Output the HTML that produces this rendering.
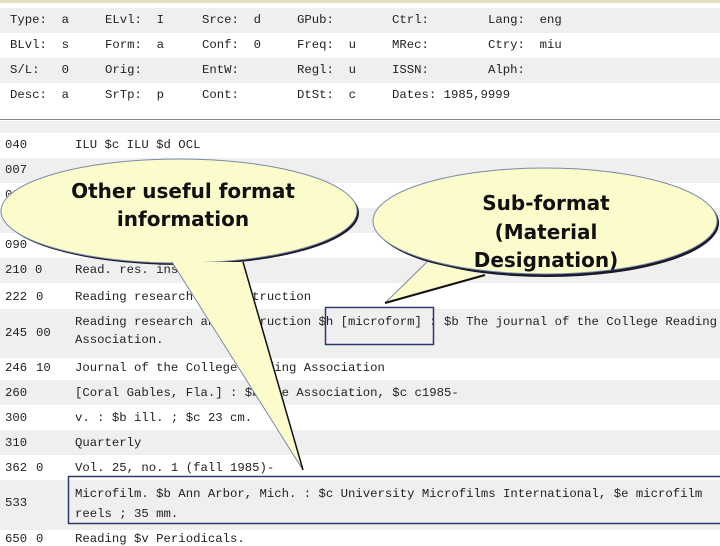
<!DOCTYPE html>
<html><head><meta charset="utf-8"><style>
html,body{margin:0;padding:0;width:720px;height:540px;overflow:hidden;background:#fff;font-family:"Liberation Mono",monospace;font-size:12.3px;color:#222}
.r{position:absolute;left:0;width:720px}
.g{background:#efefef}
.t{position:absolute;white-space:pre}
</style></head><body>
<div class="r" style="top:0;height:3px;background:#e8dcc0"></div>
<div class="r g" style="top:8px;height:25px"></div>
<div class="r g" style="top:58px;height:25px"></div>
<div class="r" style="top:119px;height:1px;background:#8a8a8a"></div>
<div class="r g" style="top:121px;height:12px"></div>
<div class="r g" style="top:158px;height:25px"></div>
<div class="r g" style="top:208px;height:25px"></div>
<div class="r g" style="top:258px;height:25px"></div>
<div class="r g" style="top:309px;height:49px"></div>
<div class="r g" style="top:380px;height:25px"></div>
<div class="r g" style="top:430px;height:25px"></div>
<div class="r g" style="top:480px;height:50px"></div>

<div class="t" style="left:10px;top:13px">Type:  a</div>
<div class="t" style="left:105px;top:13px">ELvl:  I</div>
<div class="t" style="left:202px;top:13px">Srce:  d</div>
<div class="t" style="left:297px;top:13px">GPub:</div>
<div class="t" style="left:392px;top:13px">Ctrl:</div>
<div class="t" style="left:488px;top:13px">Lang:  eng</div>
<div class="t" style="left:10px;top:38px">BLvl:  s</div>
<div class="t" style="left:105px;top:38px">Form:  a</div>
<div class="t" style="left:202px;top:38px">Conf:  0</div>
<div class="t" style="left:297px;top:38px">Freq:  u</div>
<div class="t" style="left:392px;top:38px">MRec:</div>
<div class="t" style="left:488px;top:38px">Ctry:  miu</div>
<div class="t" style="left:10px;top:63px">S/L:   0</div>
<div class="t" style="left:105px;top:63px">Orig:</div>
<div class="t" style="left:202px;top:63px">EntW:</div>
<div class="t" style="left:297px;top:63px">Regl:  u</div>
<div class="t" style="left:392px;top:63px">ISSN:</div>
<div class="t" style="left:488px;top:63px">Alph:</div>
<div class="t" style="left:10px;top:88px">Desc:  a</div>
<div class="t" style="left:105px;top:88px">SrTp:  p</div>
<div class="t" style="left:202px;top:88px">Cont:</div>
<div class="t" style="left:297px;top:88px">DtSt:  c</div>
<div class="t" style="left:392px;top:88px">Dates: 1985,9999</div>

<div class="t" style="left:5px;top:138px">040</div><div class="t" style="left:75px;top:138px">ILU $c ILU $d OCL</div>
<div class="t" style="left:5px;top:163px">007</div>
<div class="t" style="left:5px;top:188px">008</div>
<div class="t" style="left:5px;top:238px">090</div>
<div class="t" style="left:5px;top:263px">210</div><div class="t" style="left:35px;top:263px">0</div><div class="t" style="left:75px;top:263px">Read. res. ins</div>
<div class="t" style="left:5px;top:290px">222</div><div class="t" style="left:36px;top:290px">0</div><div class="t" style="left:75px;top:290px">Reading research and instruction</div>
<div class="t" style="left:5px;top:326px">245</div><div class="t" style="left:36px;top:326px">00</div>
<div class="t" style="left:75px;top:315px">Reading research and instruction $h [microform] : $b The journal of the College Reading</div>
<div class="t" style="left:75px;top:333px">Association.</div>
<div class="t" style="left:5px;top:361px">246</div><div class="t" style="left:36px;top:361px">10</div><div class="t" style="left:75px;top:361px">Journal of the College Reading Association</div>
<div class="t" style="left:5px;top:386px">260</div><div class="t" style="left:75px;top:386px">[Coral Gables, Fla.] : $b The Association, $c c1985-</div>
<div class="t" style="left:5px;top:411px">300</div><div class="t" style="left:75px;top:411px">v. : $b ill. ; $c 23 cm.</div>
<div class="t" style="left:5px;top:436px">310</div><div class="t" style="left:75px;top:436px">Quarterly</div>
<div class="t" style="left:5px;top:461px">362</div><div class="t" style="left:36px;top:461px">0</div><div class="t" style="left:75px;top:461px">Vol. 25, no. 1 (fall 1985)-</div>
<div class="t" style="left:5px;top:496px">533</div>
<div class="t" style="left:75px;top:487px">Microfilm. $b Ann Arbor, Mich. : $c University Microfilms International, $e microfilm</div>
<div class="t" style="left:75px;top:507px">reels ; 35 mm.</div>
<div class="t" style="left:5px;top:532px">650</div><div class="t" style="left:36px;top:532px">0</div><div class="t" style="left:75px;top:532px">Reading $v Periodicals.</div>

<svg width="720" height="540" style="position:absolute;left:0;top:0" xmlns="http://www.w3.org/2000/svg">
<rect x="325.5" y="307.5" width="108" height="37" fill="none" stroke="#2a3a6a" stroke-width="1.5"/>
<rect x="68.5" y="476.5" width="660" height="47" fill="none" stroke="#2a3a6a" stroke-width="1.5"/>
<g>
<ellipse cx="181" cy="213" rx="178" ry="52" fill="#1a1a2a"/>
<ellipse cx="179" cy="211" rx="178" ry="52" fill="#fbfbcb" stroke="#7a8aa8" stroke-width="1"/>
<path d="M172 262 L303 470 L243 262 Z" fill="#fbfbcb"/>
<path d="M172 262 L303 470" stroke="#7a8aa8" stroke-width="1" fill="none"/>
<path d="M243 262 L303 470" stroke="#111" stroke-width="1.5" fill="none"/>
<text x="183" y="198" text-anchor="middle" font-family="DejaVu Sans,sans-serif" font-weight="bold" font-size="20" fill="#111">Other useful format</text>
<text x="183" y="226" text-anchor="middle" font-family="DejaVu Sans,sans-serif" font-weight="bold" font-size="20" fill="#111">information</text>
</g>
<g>
<ellipse cx="547" cy="223" rx="172" ry="54" fill="#1a1a2a"/>
<ellipse cx="545" cy="221" rx="172" ry="53" fill="#fbfbcb" stroke="#7a8aa8" stroke-width="1"/>
<path d="M427 262 L385 303 L485 275 Z" fill="#fbfbcb"/>
<path d="M427 262 L385 303" stroke="#7a8aa8" stroke-width="1" fill="none"/>
<path d="M385 303 L485 275" stroke="#111" stroke-width="2" fill="none"/>
<text x="546" y="210" text-anchor="middle" font-family="DejaVu Sans,sans-serif" font-weight="bold" font-size="20" fill="#111">Sub-format</text>
<text x="546" y="239" text-anchor="middle" font-family="DejaVu Sans,sans-serif" font-weight="bold" font-size="20" fill="#111">(Material</text>
<text x="546" y="267" text-anchor="middle" font-family="DejaVu Sans,sans-serif" font-weight="bold" font-size="20" fill="#111">Designation)</text>
</g>
</svg>
</body></html>
